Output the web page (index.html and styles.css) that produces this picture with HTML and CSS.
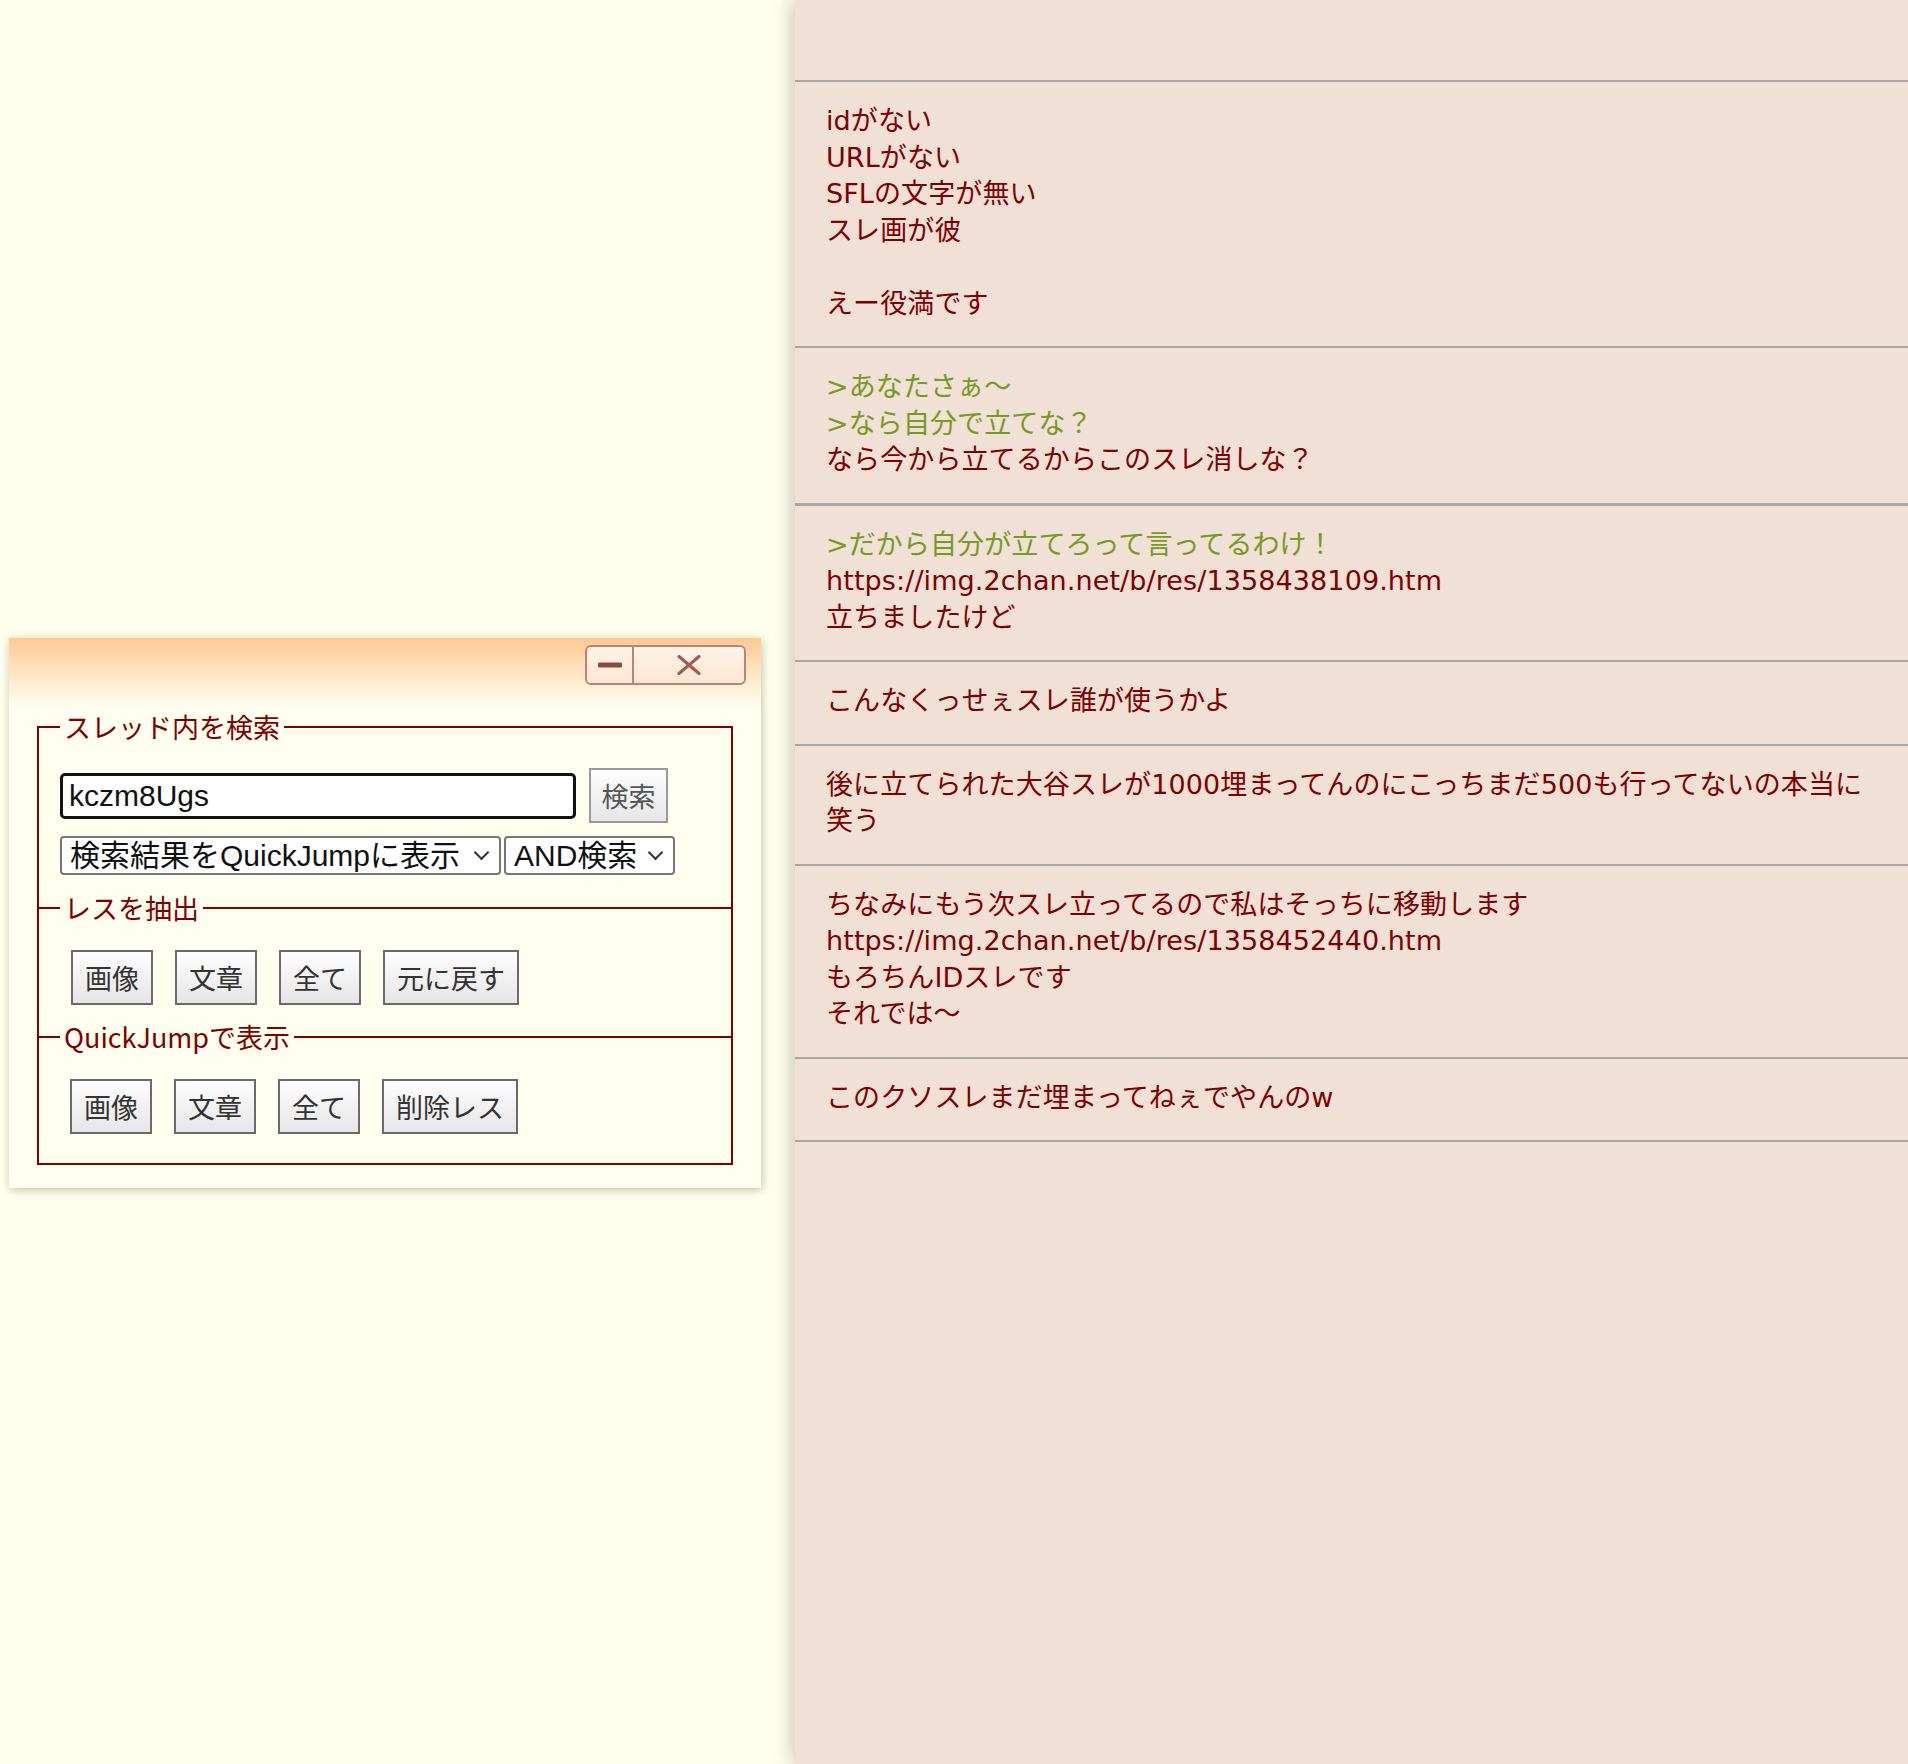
FILE: index.html
```html
<!DOCTYPE html>
<html lang="ja">
<head>
<meta charset="utf-8">
<title>futaba</title>
<link rel="stylesheet" href="styles.css">
</head>
<body>
<div class="page">
  <div class="left">
    <div class="popup">
      <div class="popup-head">
        <div class="winbtns">
          <span class="wb wb-min"><svg width="24" height="6" viewBox="0 0 24 6"><rect x="0" y="0.5" width="24" height="5" rx="1" fill="#8c4a44"/></svg></span>
          <span class="wb wb-close"><svg width="24" height="20" viewBox="0 0 24 20"><path d="M2 1.5 L22 18.5 M22 1.5 L2 18.5" stroke="#a05c56" stroke-width="3.2" stroke-linecap="round"/></svg></span>
        </div>
      </div>
      <div class="popup-body">
        <fieldset class="fs fs-search">
          <legend>スレッド内を検索</legend>
          <div class="row row-q">
            <input class="q" type="text" value="kczm8Ugs">
            <button class="btn btn-search">検索</button>
          </div>
          <div class="row row-sel">
            <span class="selwrap sel-1"><select><option>検索結果をQuickJumpに表示</option></select></span>
            <span class="selwrap sel-2"><select><option>AND検索</option></select></span>
          </div>
        </fieldset>
        <fieldset class="fs fs-extract">
          <legend>レスを抽出</legend>
          <div class="row row-btns">
            <button class="btn">画像</button>
            <button class="btn">文章</button>
            <button class="btn">全て</button>
            <button class="btn">元に戻す</button>
          </div>
        </fieldset>
        <fieldset class="fs fs-qj">
          <legend>QuickJumpで表示</legend>
          <div class="row row-btns">
            <button class="btn">画像</button>
            <button class="btn">文章</button>
            <button class="btn">全て</button>
            <button class="btn">削除レス</button>
          </div>
        </fieldset>
      </div>
    </div>
  </div>
  <div class="right">
    <div class="spacer"></div>
    <div class="post">idがない<br>URLがない<br>SFLの文字が無い<br>スレ画が彼<br><br>えー役満です</div>
    <div class="post"><span class="quote">&gt;あなたさぁ～</span><br><span class="quote">&gt;なら自分で立てな？</span><br>なら今から立てるからこのスレ消しな？</div>
    <div class="post post-thick"><span class="quote">&gt;だから自分が立てろって言ってるわけ！</span><br>https://img.2chan.net/b/res/1358438109.htm<br>立ちましたけど</div>
    <div class="post">こんなくっせぇスレ誰が使うかよ</div>
    <div class="post">後に立てられた大谷スレが1000埋まってんのにこっちまだ500も行ってないの本当に<br>笑う</div>
    <div class="post">ちなみにもう次スレ立ってるので私はそっちに移動します<br>https://img.2chan.net/b/res/1358452440.htm<br>もろちんIDスレです<br>それでは～</div>
    <div class="post post-last">このクソスレまだ埋まってねぇでやんのw</div>
  </div>
</div>
</body>
</html>
```

FILE: styles.css
```css
* { box-sizing: border-box; }
html, body { margin: 0; padding: 0; }
body {
  background: #ffffee;
  font-family: "DejaVu Sans", "Noto Sans CJK JP", sans-serif;
}
.page {
  display: flex;
  height: 1764px;
  overflow: hidden;
}
.left {
  width: 795px;
  flex: 0 0 795px;
  position: relative;
  background: #ffffee;
}
.right {
  flex: 1;
  background: #f0e0d6;
  box-shadow: -4px 0 18px rgba(60, 70, 40, 0.28);
  position: relative;
  z-index: 1;
  color: #800000;
  font-size: 27px;
  line-height: 36.5px;
}
.spacer { height: 80px; }
.post {
  border-top: 2px solid #aaa6a2;
  padding: 21px 31px 24px;
  letter-spacing: 0.1px;
}
.post-thick { border-top-width: 3px; }
.post-last { border-bottom: 2px solid #aaa6a2; }
.quote { color: #789922; }

/* floating window */
.popup {
  position: absolute;
  left: 9px;
  top: 638px;
  width: 752px;
  background: #fffff0;
  box-shadow: 1px 2px 9px rgba(80, 80, 40, 0.35);
}
.popup-head {
  height: 71px;
  padding: 7px 15px 0 0;
  display: flex;
  justify-content: flex-end;
  align-items: flex-start;
  background: linear-gradient(to bottom, #ffc893 0%, #ffe2c0 45%, #fffff0 100%);
}
.winbtns {
  display: flex;
  height: 40px;
  border: 2px solid #b88478;
  border-radius: 6px;
  overflow: hidden;
  background: linear-gradient(to bottom, #fff3e8, #ffe6d2);
}
.wb {
  display: flex;
  align-items: center;
  justify-content: center;
  height: 100%;
}
.wb-min { width: 47px; border-right: 2px solid #b88478; }
.wb-close { width: 110px; }

.popup-body {
  padding: 0 28px 23px;
}
.fs {
  margin: 0;
  border: 2px solid #800000;
  padding: 0 21px;
  min-width: 0;
}
.fs-search { border-bottom: none; padding-bottom: 33px; }
.fs-extract { border-bottom: none; padding-bottom: 32px; margin-top: -18px; }
.fs-qj { padding-bottom: 29px; margin-top: -18px; }
legend {
  font-family: "Noto Sans CJK JP", sans-serif;
  font-size: 27px;
  line-height: 36px;
  color: #800000;
  padding: 0 4px;
}
.row { display: flex; align-items: center; }
.row-q { margin-top: 23px; gap: 13px; }
.row-sel { margin-top: 13px; gap: 3px; }
.fs-extract .row-btns { margin-top: 24px; margin-left: 11px; gap: 22px; }
.fs-qj .row-btns { margin-top: 24px; margin-left: 10px; gap: 22px; }

.q {
  width: 516px;
  height: 46px;
  border: 3px solid #111;
  border-radius: 5px;
  background: #fff;
  font-family: "Liberation Sans", "Noto Sans CJK JP", sans-serif;
  font-size: 30px;
  color: #111;
  padding: 0 6px;
  outline: none;
}
.btn {
  height: 55px;
  padding: 0 12px;
  border: 2px solid #6a6a6a;
  border-radius: 0;
  background: linear-gradient(to bottom, #fdfdfd, #e6e6e6);
  font-family: "Noto Sans CJK JP", sans-serif;
  font-size: 27px;
  line-height: 1;
  color: #333;
}
.btn-search {
  width: 79px;
  padding: 0;
  border-color: #9a9a9a;
  color: #555;
}
.selwrap {
  position: relative;
  display: block;
  height: 39px;
}
.sel-1 { width: 441px; }
.sel-2 { width: 171px; }
.selwrap select {
  appearance: none;
  -webkit-appearance: none;
  width: 100%;
  height: 100%;
  border: 2px solid #767676;
  border-radius: 4px;
  background: #fff;
  font-family: "Liberation Sans", "Noto Sans CJK JP", sans-serif;
  font-size: 30px;
  color: #111;
  padding: 0 30px 0 8px;
  line-height: 35px;
}
.selwrap::after {
  content: "";
  position: absolute;
  right: 14px;
  top: 11px;
  width: 9px;
  height: 9px;
  border-right: 2px solid #333;
  border-bottom: 2px solid #333;
  transform: rotate(45deg);
  pointer-events: none;
}
```
